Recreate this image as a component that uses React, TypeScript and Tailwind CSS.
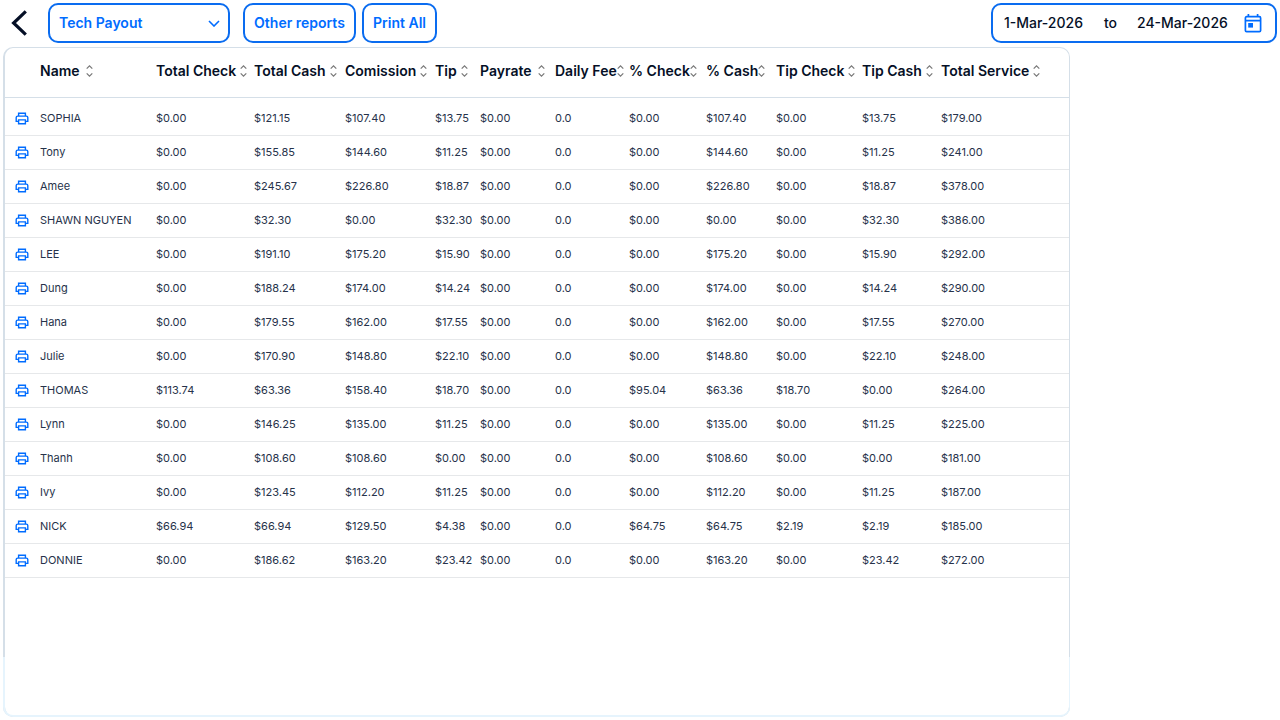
import React, { useState } from 'react';

type SortKey = number | null;

interface Column {
  label: string;
  width: string;
  gap: string;
}

const COLUMNS: Column[] = [
  { label: 'Name', width: 'w-[116px]', gap: 'gap-1.5' },
  { label: 'Total Check', width: 'w-[98px]', gap: 'gap-1' },
  { label: 'Total Cash', width: 'w-[91px]', gap: 'gap-1' },
  { label: 'Comission', width: 'w-[90px]', gap: 'gap-1' },
  { label: 'Tip', width: 'w-[45px]', gap: 'gap-1' },
  { label: 'Payrate', width: 'w-[75px]', gap: 'gap-1.5' },
  { label: 'Daily Fee', width: 'w-[74px]', gap: 'gap-0' },
  { label: '% Check', width: 'w-[77px]', gap: 'gap-0' },
  { label: '% Cash', width: 'w-[70px]', gap: 'gap-0' },
  { label: 'Tip Check', width: 'w-[86px]', gap: 'gap-1' },
  { label: 'Tip Cash', width: 'w-[79px]', gap: 'gap-1' },
  { label: 'Total Service', width: 'w-[128px]', gap: 'gap-1' },
];

const ROWS: string[][] = [
  ['SOPHIA', '$0.00', '$121.15', '$107.40', '$13.75', '$0.00', '0.0', '$0.00', '$107.40', '$0.00', '$13.75', '$179.00'],
  ['Tony', '$0.00', '$155.85', '$144.60', '$11.25', '$0.00', '0.0', '$0.00', '$144.60', '$0.00', '$11.25', '$241.00'],
  ['Amee', '$0.00', '$245.67', '$226.80', '$18.87', '$0.00', '0.0', '$0.00', '$226.80', '$0.00', '$18.87', '$378.00'],
  ['SHAWN NGUYEN', '$0.00', '$32.30', '$0.00', '$32.30', '$0.00', '0.0', '$0.00', '$0.00', '$0.00', '$32.30', '$386.00'],
  ['LEE', '$0.00', '$191.10', '$175.20', '$15.90', '$0.00', '0.0', '$0.00', '$175.20', '$0.00', '$15.90', '$292.00'],
  ['Dung', '$0.00', '$188.24', '$174.00', '$14.24', '$0.00', '0.0', '$0.00', '$174.00', '$0.00', '$14.24', '$290.00'],
  ['Hana', '$0.00', '$179.55', '$162.00', '$17.55', '$0.00', '0.0', '$0.00', '$162.00', '$0.00', '$17.55', '$270.00'],
  ['Julie', '$0.00', '$170.90', '$148.80', '$22.10', '$0.00', '0.0', '$0.00', '$148.80', '$0.00', '$22.10', '$248.00'],
  ['THOMAS', '$113.74', '$63.36', '$158.40', '$18.70', '$0.00', '0.0', '$95.04', '$63.36', '$18.70', '$0.00', '$264.00'],
  ['Lynn', '$0.00', '$146.25', '$135.00', '$11.25', '$0.00', '0.0', '$0.00', '$135.00', '$0.00', '$11.25', '$225.00'],
  ['Thanh', '$0.00', '$108.60', '$108.60', '$0.00', '$0.00', '0.0', '$0.00', '$108.60', '$0.00', '$0.00', '$181.00'],
  ['Ivy', '$0.00', '$123.45', '$112.20', '$11.25', '$0.00', '0.0', '$0.00', '$112.20', '$0.00', '$11.25', '$187.00'],
  ['NICK', '$66.94', '$66.94', '$129.50', '$4.38', '$0.00', '0.0', '$64.75', '$64.75', '$2.19', '$2.19', '$185.00'],
  ['DONNIE', '$0.00', '$186.62', '$163.20', '$23.42', '$0.00', '0.0', '$0.00', '$163.20', '$0.00', '$23.42', '$272.00'],
];

const BackIcon = () => (
  <svg viewBox="0 0 16 26" className="w-4 h-[26px]" fill="none" stroke="currentColor" strokeWidth="3.2">
    <path d="M14.8 1.4 2.6 13l12.2 11.6" />
  </svg>
);

const ChevronIcon = () => (
  <svg viewBox="0 0 12 7" className="w-3 h-[7px]" fill="none" stroke="currentColor" strokeWidth="1.6">
    <path d="m1 1 5 5 5-5" />
  </svg>
);

const SortIcon = () => (
  <svg viewBox="0 0 7 12" className="w-[7px] h-3 flex-shrink-0" fill="none" stroke="#777777" strokeWidth="1.2">
    <path d="M.7 3.7 3.5.9l2.8 2.8M.7 8.3l2.8 2.8 2.8-2.8" />
  </svg>
);

const PrintIcon = () => (
  <svg viewBox="0 0 14 13" className="block w-3.5 h-[13px]" fill="none" stroke="currentColor" strokeWidth="1.4">
    <path d="M3.6 4V1.2h6.8V4M3.6 9.4H1.2V5.6c0-.9.6-1.5 1.5-1.5h8.6c.9 0 1.5.6 1.5 1.5v3.8h-2.4M3.6 7.9h6.8v3.9H3.6z" />
  </svg>
);

const CalendarIcon = () => (
  <svg viewBox="0 0 18 19" className="w-[18px] h-[19px]" fill="none" stroke="currentColor" strokeWidth="1.7">
    <rect x="1.4" y="2.7" width="15.2" height="15" rx="1.2" />
    <path d="M1.4 6.6h15.2M4.4 0v3M13.6 0v3" />
    <path d="M4.2 9h4.8v4.6H4.2z" fill="currentColor" stroke="none" />
  </svg>
);

const OUTLINE_BUTTON =
  'h-10 rounded-[10px] border-2 border-[#0a6cf0] bg-white text-[#006cff] text-sm font-semibold whitespace-nowrap cursor-pointer';

export default function App() {
  const [report, setReport] = useState('Tech Payout');
  const [from, setFrom] = useState('1-Mar-2026');
  const [to, setTo] = useState('24-Mar-2026');
  const [sortBy, setSortBy] = useState<SortKey>(null);

  const rows = sortBy === null
    ? ROWS
    : [...ROWS].sort((a, b) => a[sortBy].localeCompare(b[sortBy], undefined, { numeric: true }));

  return (
    <div className="flex flex-col min-h-screen bg-white text-[#050f26] font-[Inter,sans-serif] pb-[3px]">
      {/* Toolbar */}
      <header className="flex items-center pl-[11px] pr-[3px] pt-[3px] pb-1">
        <button type="button" aria-label="Back" className="mr-[21px] cursor-pointer">
          <BackIcon />
        </button>

        <div className="relative mr-[13px] text-[#006cff]">
          <select
            aria-label="Report"
            value={report}
            onChange={e => setReport(e.target.value)}
            className={`${OUTLINE_BUTTON} block appearance-none w-[182px] pl-[9px] pr-8`}
          >
            <option>Tech Payout</option>
          </select>
          <span className="absolute right-2.5 inset-y-0 flex items-center pointer-events-none">
            <ChevronIcon />
          </span>
        </div>

        <button type="button" className={`${OUTLINE_BUTTON} px-2 min-w-[113px] mr-1.5`}>Other reports</button>
        <button type="button" className={`${OUTLINE_BUTTON} px-2 min-w-[75px]`}>Print All</button>

        <div className="ml-auto flex items-center h-10 rounded-[10px] border-2 border-[#0a6cf0] pl-[11px] pr-[13px] text-sm font-medium">
          <input
            aria-label="From date"
            value={from}
            onChange={e => setFrom(e.target.value)}
            className="w-[100px] outline-none"
          />
          <span className="mr-5">to</span>
          <input
            aria-label="To date"
            value={to}
            onChange={e => setTo(e.target.value)}
            className="w-[107px] outline-none"
          />
          <button type="button" aria-label="Pick dates" className="text-[#006cff] cursor-pointer">
            <CalendarIcon />
          </button>
        </div>
      </header>

      {/* Payout table */}
      <main className="relative flex-1 ml-[3px] w-[1067px] max-w-full rounded-[10px] border border-l-2 border-[#d5dfe8]">
        <table className="w-full table-fixed border-collapse text-left">
          <thead>
            <tr className="h-[49px] border-b border-[#d5dfe8]">
              <th className="w-[35px]" aria-label="Print" />
              {COLUMNS.map((col, i) => (
                <th key={col.label} className={`${col.width} pb-0.5 font-semibold`}>
                  <button
                    type="button"
                    onClick={() => setSortBy(i)}
                    className={`flex items-center ${col.gap} text-sm whitespace-nowrap cursor-pointer`}
                  >
                    {col.label}
                    <SortIcon />
                  </button>
                </th>
              ))}
            </tr>
          </thead>
          <tbody className="text-[11px] text-[#26324a]">
            {rows.map(row => (
              <tr key={row[0]} className="h-[34px] first:h-[38px] first:[&>td]:pt-1 border-b border-[#e6e8ea]">
                <td className="pl-2.5">
                  <button type="button" aria-label={`Print ${row[0]}`} className="block text-[#006cff] cursor-pointer">
                    <PrintIcon />
                  </button>
                </td>
                {row.map((cell, i) => (
                  <td key={i} className="whitespace-nowrap">{cell}</td>
                ))}
              </tr>
            ))}
          </tbody>
        </table>
        {/* Lighter lower edge of the card */}
        <div className="absolute -left-0.5 -right-px -bottom-px h-[60px] rounded-b-[10px] border border-l-2 border-b-2 border-t-0 border-[#e6f4fd] pointer-events-none" />
      </main>
    </div>
  );
}
